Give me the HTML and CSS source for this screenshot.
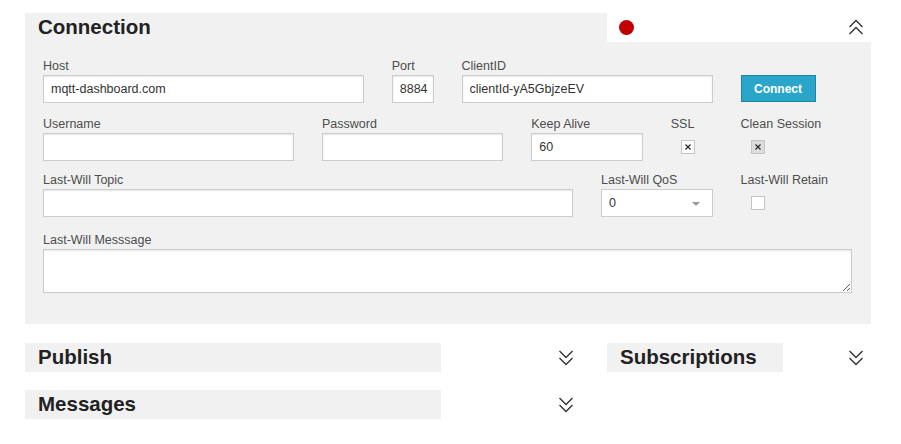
FILE: index.html
```html
<!DOCTYPE html>
<html lang="en">
<head>
<meta charset="utf-8">
<title>MQTT Websocket Client</title>
<link rel="stylesheet" href="styles.css">
</head>
<body>
<div class="page">
  <section class="panel">
    <header class="head">
      <h2 class="title title-conn">Connection</h2>
      <span class="dot"></span>
      <span class="toggle">
        <svg width="16" height="17" viewBox="0 0 16 17"><polyline points="1.5,8 8,1.5 14.5,8" /><polyline points="1.5,15 8,8.5 14.5,15" /></svg>
      </span>
    </header>
    <div class="panel-body">
      <div class="row row-1">
        <div class="field span-5"><label>Host</label><input type="text" value="mqtt-dashboard.com"></div>
        <div class="field span-1"><label>Port</label><input type="text" class="narrow" value="8884"></div>
        <div class="field span-4"><label>ClientID</label><input type="text" value="clientId-yA5GbjzeEV"></div>
        <div class="field span-1"><label>&nbsp;</label><button class="btn">Connect</button></div>
      </div>
      <div class="row row-2">
        <div class="field span-4"><label>Username</label><input type="text"></div>
        <div class="field span-3"><label>Password</label><input type="password"></div>
        <div class="field span-2"><label>Keep Alive</label><input type="text" value="60"></div>
        <div class="field span-1"><label>SSL</label><div class="check-wrap"><span class="check"><svg width="6" height="6" viewBox="0 0 6 6"><path d="M0.5 0.5 L5.5 5.5 M5.5 0.5 L0.5 5.5"/></svg></span></div></div>
        <div class="field span-1"><label>Clean Session</label><div class="check-wrap"><span class="check disabled"><svg width="6" height="6" viewBox="0 0 6 6"><path d="M0.5 0.5 L5.5 5.5 M5.5 0.5 L0.5 5.5"/></svg></span></div></div>
      </div>
      <div class="row row-3">
        <div class="field span-8"><label>Last-Will Topic</label><input type="text"></div>
        <div class="field span-2"><label>Last-Will QoS</label>
          <div class="select-wrap">
            <select><option>0</option><option>1</option><option>2</option></select>
            <svg class="select-arrow" width="8" height="4" viewBox="0 0 8 4"><polygon points="0,0 8,0 4,4"/></svg>
          </div>
        </div>
        <div class="field span-1"><label>Last-Will Retain</label><div class="check-wrap"><span class="check"></span></div></div>
      </div>
      <div class="row row-4">
        <div class="field span-12"><label>Last-Will Messsage</label><textarea></textarea></div>
      </div>
    </div>
  </section>

  <div class="lower">
    <div class="col-main">
      <section class="section">
        <header class="head">
          <h2 class="title title-pub">Publish</h2>
          <span class="toggle toggle-pub">
            <svg width="16" height="17" viewBox="0 0 16 17"><polyline points="1.5,2 8,8.5 14.5,2" /><polyline points="1.5,9 8,15.5 14.5,9" /></svg>
          </span>
        </header>
      </section>
      <section class="section">
        <header class="head">
          <h2 class="title title-pub">Messages</h2>
          <span class="toggle toggle-pub">
            <svg width="16" height="17" viewBox="0 0 16 17"><polyline points="1.5,2 8,8.5 14.5,2" /><polyline points="1.5,9 8,15.5 14.5,9" /></svg>
          </span>
        </header>
      </section>
    </div>
    <div class="col-side">
      <section class="section">
        <header class="head">
          <h2 class="title title-sub">Subscriptions</h2>
          <span class="toggle">
            <svg width="16" height="17" viewBox="0 0 16 17"><polyline points="1.5,2 8,8.5 14.5,2" /><polyline points="1.5,9 8,15.5 14.5,9" /></svg>
          </span>
        </header>
      </section>
    </div>
  </div>
</div>
</body>
</html>
```

FILE: styles.css
```css
* { box-sizing: border-box; }

body {
  margin: 0;
  background: #fff;
  font-family: "Liberation Sans", Arial, sans-serif;
  color: #222;
}

.page {
  width: 871px;
  padding: 13px 0 0 25px;
}

.panel { background: #fff; }

.head {
  display: flex;
  align-items: center;
  height: 29px;
  background: #fff;
}

.title {
  margin: 0;
  height: 29px;
  line-height: 27px;
  padding-left: 13px;
  background: #f1f1f1;
  font-size: 20.5px;
  font-weight: bold;
  color: #222;
}

.title-conn { width: 582px; }
.title-pub { width: 416px; }
.title-sub { width: 176px; }

.dot {
  width: 15px;
  height: 15px;
  margin-left: 12px;
  border-radius: 50%;
  background: #c00000;
}

.toggle {
  display: block;
  width: 16px;
  height: 17px;
  margin-left: auto;
  margin-right: 7px;
}

.toggle-pub { margin-right: 9px; }

.toggle svg { display: block; }

.toggle polyline {
  fill: none;
  stroke: #333;
  stroke-width: 1.4;
}

.panel-body {
  background: #f1f1f1;
  padding: 15px 19px 31px 18px;
}

.row {
  display: grid;
  grid-template-columns: repeat(12, 1fr);
  column-gap: 28px;
}

.row-1 { margin-bottom: 12px; }
.row-2 { margin-bottom: 10px; }
.row-3 { margin-bottom: 14px; }

.span-1 { grid-column: span 1; }
.span-2 { grid-column: span 2; }
.span-3 { grid-column: span 3; }
.span-4 { grid-column: span 4; }
.span-5 { grid-column: span 5; }
.span-8 { grid-column: span 8; }
.span-12 { grid-column: span 12; }

.field { min-width: 0; }

.field label {
  display: block;
  height: 16px;
  margin: 1px 0 1px;
  font-size: 12.5px;
  line-height: 16px;
  color: #4d4d4d;
  white-space: nowrap;
}

.field input,
.field select,
.field textarea {
  display: block;
  width: 100%;
  height: 28px;
  margin: 0;
  padding: 0 7px;
  border: 1px solid #ccc;
  border-radius: 0;
  background: #fff;
  box-shadow: inset 0 1px 2px rgba(0, 0, 0, 0.1);
  font-family: "Liberation Sans", Arial, sans-serif;
  font-size: 12.5px;
  color: #333;
  outline: none;
}

.field input.narrow { padding: 0 2px 0 7px; }

.field textarea {
  height: 44px;
  padding: 6px 7px;
  resize: both;
}

.select-wrap { position: relative; }

.field select {
  appearance: none;
  -webkit-appearance: none;
  box-shadow: none;
  padding-left: 7px;
}

.select-arrow {
  position: absolute;
  left: 91px;
  top: 13px;
  fill: #999;
}

.btn {
  display: block;
  width: 75px;
  height: 27px;
  margin: 0;
  padding: 0;
  border: 1px solid #2284a1;
  background: #2ba6cb;
  color: #fff;
  font-family: "Liberation Sans", Arial, sans-serif;
  font-size: 12px;
  font-weight: bold;
  cursor: pointer;
}

.check-wrap {
  display: flex;
  align-items: center;
  height: 28px;
  padding-left: 10px;
}

.check {
  display: flex;
  align-items: center;
  justify-content: center;
  width: 14px;
  height: 14px;
  border: 1px solid #c4c4c4;
  background: #fff;
}

.check.disabled { background: #dcdcdc; }

.check svg path {
  stroke: #222;
  stroke-width: 1.1;
  fill: none;
}

.lower {
  display: flex;
  gap: 24px;
  margin-top: 19px;
}

.col-main { width: 558px; }
.col-side { width: 264px; }

.section + .section { margin-top: 18px; }
```
